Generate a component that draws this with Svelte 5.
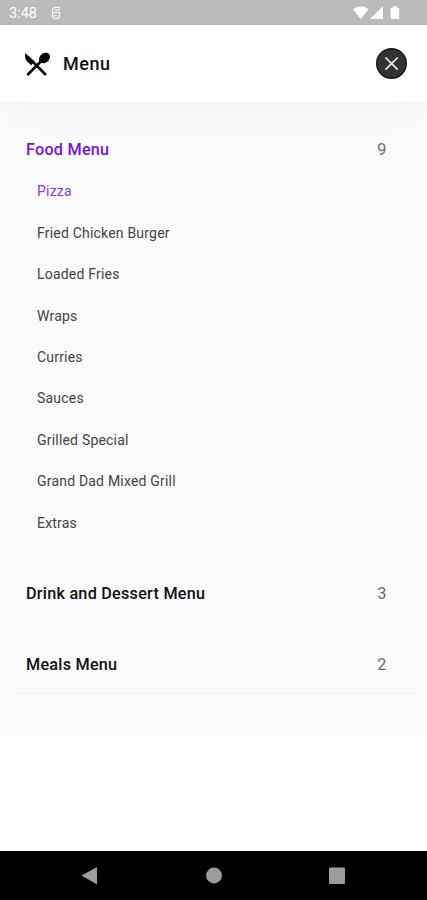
<script>
  const groups = [
    {
      title: 'Food Menu',
      count: 9,
      items: [
        'Pizza',
        'Fried Chicken Burger',
        'Loaded Fries',
        'Wraps',
        'Curries',
        'Sauces',
        'Grilled Special',
        'Grand Dad Mixed Grill',
        'Extras'
      ]
    },
    { title: 'Drink and Dessert Menu', count: 3, items: [] },
    { title: 'Meals Menu', count: 2, items: [] }
  ]

  let openGroup = $state('Food Menu')
  let selected = $state('Pizza')
</script>

<div class="screen">
  <div class="status">
    <span class="time">3:48</span>
    <svg class="app-icon" width="10" height="14" viewBox="0 0 10 14">
      <path d="M8.600 3.600V1.300H3.400L1.400 3.300V10.800L3 12.600H7L8.600 10.800V6.300H1.400M3.600 3.900H8.600M3.400 8.400V9.800H6.600" />
    </svg>
    <svg class="signals" width="48" height="14" viewBox="0 0 48 14">
      <path d="M1 3.200Q8.800-2.800 16.600 3.200L8.800 13z" />
      <path d="M31 .2V13H17.800z" />
      <path d="M39.300 1.700h1.800V0h3.600v1.700h1.800q.7 0 .7.800v9.800q0 .8-.7.800h-7.200q-.7 0-.7-.8V2.500q0-.8.7-.8z" />
    </svg>
  </div>

  <header>
    <svg class="logo" width="28" height="28" viewBox="0 0 28 28">
      <path d="M1.200 3L10.600 11.300L7.200 15.200L2 10.200Q.6 7 1.200 3z" />
      <ellipse cx="20.500" cy="8" rx="6.100" ry="4.700" transform="rotate(-42 20.500 8)" />
      <path class="handle" d="M17.300 11L3.300 25M8.500 11.500L22 25" />
    </svg>
    <h1>Menu</h1>
    <button class="close" aria-label="Close">
      <svg width="31" height="31" viewBox="0 0 31 31">
        <circle cx="15.500" cy="15.500" r="14.800" />
        <path d="M10 10l11.200 11.200M21.200 10L10 21.200" />
      </svg>
    </button>
  </header>

  <main>
    {#each groups as group}
      <section>
        <button class="title" class:active={group.title === openGroup} onclick={() => (openGroup = group.title)}>
          <span>{group.title}</span>
          <span class="count">{group.count}</span>
        </button>
        {#if group.title === openGroup}
          {#each group.items as item}
            <button class="item" class:active={item === selected} onclick={() => (selected = item)}>{item}</button>
          {/each}
        {/if}
      </section>
    {/each}
  </main>

  <nav>
    <svg width="427" height="49" viewBox="0 0 427 49">
      <path d="M81.500 24.500L97 16v17.500z" />
      <circle cx="214" cy="24.500" r="7.900" />
      <rect x="329" y="16.500" width="16" height="16.500" rx="1" />
    </svg>
  </nav>
</div>

<style>
  :global(body) {
    margin: 0;
    background: #fff;
  }
  .screen {
    display: flex;
    flex-direction: column;
    width: 427px;
    height: 900px;
    overflow: hidden;
    background: #fff;
    font-family: Roboto, sans-serif;
    color: #111;
  }
  svg {
    display: block;
  }
  button {
    border: 0;
    padding: 0;
    background: none;
    font-family: inherit;
    text-align: left;
  }
  .status {
    display: flex;
    align-items: center;
    flex: none;
    height: 25px;
    padding: 1px 27px 0 9px;
    box-sizing: border-box;
    background: #bababa;
    color: #fff;
  }
  .time {
    width: 42px;
    font-size: 14.5px;
  }
  .app-icon {
    fill: none;
    stroke: #f4f4f4;
    stroke-width: 1.2;
  }
  .signals {
    margin-left: auto;
    fill: #fff;
  }
  header {
    display: flex;
    align-items: center;
    flex: none;
    z-index: 1;
    height: 77px;
    padding: 0 20px 0 24px;
    box-sizing: border-box;
    border-radius: 0 0 8px 8px;
    background: #fff;
    box-shadow: 0 28px 32px -12px rgba(0, 0, 0, 0.026);
  }
  .logo {
    fill: #000;
  }
  .handle {
    stroke: #000;
    stroke-width: 2.5;
  }
  h1 {
    margin: 0 0 0 11px;
    font-size: 18px;
    font-weight: 500;
    letter-spacing: 0.5px;
  }
  .close {
    margin-left: auto;
  }
  .close circle {
    fill: #333;
    stroke: #161616;
    stroke-width: 1.4;
  }
  .close path {
    stroke: #eee;
    stroke-width: 1.7;
    stroke-linecap: round;
  }
  main {
    flex: none;
    height: 633px;
    padding: 6px 12px 0 15px;
    box-sizing: border-box;
    background: #fafafa;
  }
  section {
    display: flex;
    flex-direction: column;
    padding: 21px 0 7.5px;
    border-bottom: 1px solid #f6f6f6;
  }
  section:last-child {
    border-color: #efefef;
  }
  .title {
    display: flex;
    align-items: center;
    justify-content: space-between;
    height: 41.5px;
    padding: 0 28.5px 0 11px;
    font-size: 16.2px;
    font-weight: 500;
    letter-spacing: 0.25px;
    color: #111;
  }
  .title.active {
    color: #7214e6;
  }
  .count {
    font-weight: 400;
    color: #6c6c6c;
  }
  .item {
    height: 41.45px;
    padding-left: 22px;
    font-size: 14px;
    letter-spacing: 0.2px;
    color: #444;
  }
  .item.active {
    color: #8638ee;
  }
  nav {
    margin-top: auto;
    height: 49px;
    background: #000;
  }
  nav svg {
    fill: #9c9c9c;
  }
</style>
